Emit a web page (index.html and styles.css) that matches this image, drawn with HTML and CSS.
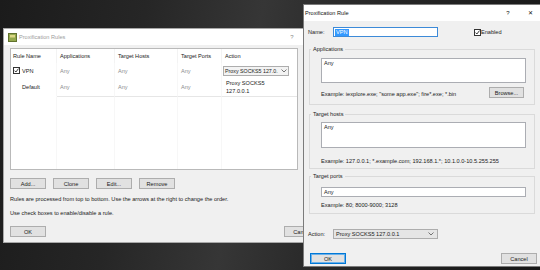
FILE: index.html
```html
<!DOCTYPE html>
<html lang="en">
<head>
<meta charset="utf-8">
<title>Proxification Rules</title>
<link rel="stylesheet" href="styles.css">
</head>
<body>
<div class="desktop">
    <!-- 规则列表窗口（未激活，被右边窗口挡住一部分） -->
    <div class="win rules-win">
        <div class="titlebar">
            <svg class="app-icon" width="9" height="9" viewBox="0 0 9 9"><rect x="0.5" y="0.5" width="8" height="8" fill="#93a84c" stroke="#62722e"/><path d="M2 2h5v2.5H2z" fill="#dcd784"/></svg>
            <span class="title">Proxification Rules</span>
            <span class="tb-btn">?</span>
            <span class="tb-btn">&#x2715;</span>
        </div>
        <div class="win-body">
            <div class="table-row">
                <table class="rules">
                    <colgroup>
                        <col class="c-name"><col class="c-apps"><col class="c-hosts"><col class="c-ports"><col class="c-action">
                    </colgroup>
                    <thead>
                        <tr><th>Rule Name</th><th>Applications</th><th>Target Hosts</th><th>Target Ports</th><th>Action</th></tr>
                    </thead>
                    <tbody>
                        <tr class="r-vpn">
                            <td><span class="chk-line"><svg class="chk" width="7" height="7" viewBox="0 0 7 7"><rect x="0.5" y="0.5" width="6" height="6" fill="#fff" stroke="#333"/><path d="M1.5 3.6L2.9 5L5.5 1.6" fill="none" stroke="#222" stroke-width="0.9"/></svg>VPN</span></td>
                            <td class="dim">Any</td><td class="dim">Any</td><td class="dim">Any</td>
                            <td class="act"><div class="combo small"><span class="combo-text">Proxy SOCKS5 127.0.</span><svg width="6" height="4" viewBox="0 0 6 4"><polyline points="0.5,0.5 3,3 5.5,0.5" fill="none" stroke="#555" stroke-width="0.8"/></svg></div></td>
                        </tr>
                        <tr class="r-default">
                            <td class="indent">Default</td>
                            <td class="dim">Any</td><td class="dim">Any</td><td class="dim">Any</td>
                            <td class="two">Proxy SOCKS5<br>127.0.0.1</td>
                        </tr>
                        <tr class="filler"><td></td><td></td><td></td><td></td><td></td></tr>
                    </tbody>
                </table>
                <div class="arrows">
                    <span class="btn arrow">&#x25B2;</span>
                    <span class="btn arrow">&#x25BC;</span>
                </div>
            </div>
            <div class="btn-row">
                <span class="btn">Add...</span>
                <span class="btn">Clone</span>
                <span class="btn">Edit...</span>
                <span class="btn">Remove</span>
            </div>
            <p class="hint">Rules are processed from top to bottom. Use the arrows at the right to change the order.</p>
            <p class="hint">Use check boxes to enable/disable a rule.</p>
            <div class="dlg-btns">
                <span class="btn">OK</span>
                <span class="btn push-right">Cancel</span>
            </div>
        </div>
    </div>

    <!-- 单条规则编辑窗口（当前激活） -->
    <div class="win rule-win">
        <div class="titlebar">
            <span class="title">Proxification Rule</span>
            <span class="tb-btn">?</span>
            <span class="tb-btn">&#x2715;</span>
        </div>
        <div class="win-body">
            <div class="form-row name-row">
                <span class="lbl">Name:</span>
                <div class="input focus"><span class="sel">VPN</span></div>
                <span class="enabled"><svg class="chk" width="7" height="7" viewBox="0 0 7 7"><rect x="0.5" y="0.5" width="6" height="6" fill="#fff" stroke="#333"/><path d="M1.5 3.6L2.9 5L5.5 1.6" fill="none" stroke="#222" stroke-width="0.9"/></svg>Enabled</span>
            </div>

            <fieldset class="group g-apps">
                <legend>Applications</legend>
                <div class="field tall">Any</div>
                <div class="ex-row">
                    <span class="ex">Example: iexplore.exe; "some app.exe"; fire*.exe; *.bin</span>
                    <span class="btn browse">Browse...</span>
                </div>
            </fieldset>

            <fieldset class="group g-hosts">
                <legend>Target hosts</legend>
                <div class="field tall hosts">Any</div>
                <p class="ex ex-hosts">Example: 127.0.0.1; *.example.com; 192.168.1.*; 10.1.0.0-10.5.255.255</p>
            </fieldset>

            <fieldset class="group g-ports">
                <legend>Target ports</legend>
                <div class="field">Any</div>
                <p class="ex ex-ports">Example: 80; 8000-9000; 3128</p>
            </fieldset>

            <div class="form-row action-row">
                <span class="lbl">Action:</span>
                <div class="combo"><span class="combo-text">Proxy SOCKS5 127.0.0.1</span><svg width="6" height="4" viewBox="0 0 6 4"><polyline points="0.5,0.5 3,3 5.5,0.5" fill="none" stroke="#555" stroke-width="0.8"/></svg></div>
            </div>

            <div class="dlg-btns">
                <span class="btn default">OK</span>
                <span class="btn push-right">Cancel</span>
            </div>
        </div>
    </div>
</div>
</body>
</html>
```

FILE: styles.css
```css
*{margin: 0;padding: 0;box-sizing: border-box;}
body{width: 540px;height: 270px;overflow: hidden;background: #161616;font-family: "Liberation Sans", Arial, sans-serif;font-size: 5.6px;line-height: 8px;color: #1a1a1a;}
/*桌面背景*/
.desktop{position: relative;width: 540px;height: 270px;background: linear-gradient(100deg, #1b1b1b 0%, #262626 25%, #363636 45%, #2a2a2a 60%, #161616 100%);}

/*窗口公共样式*/
.win{position: absolute;display: flex;flex-direction: column;background: #f0f0f0;}
.titlebar{display: flex;align-items: center;height: 16px;flex-shrink: 0;background: #fff;}
.title{flex: 1;white-space: nowrap;}
.tb-btn{width: 22px;text-align: center;font-size: 6px;}
.win-body{flex: 1;display: flex;flex-direction: column;}

/*按钮*/
.btn{display: flex;align-items: center;justify-content: center;width: 36px;height: 11px;background: #e1e1e1;border: 1px solid #adadad;white-space: nowrap;}
.btn.default{border-color: #0078d7;box-shadow: inset 0 0 0 1px #6cb0e8;}
.push-right{margin-left: auto;}
.dlg-btns{display: flex;}

/*左边规则列表窗口*/
.rules-win{left: 3px;top: 28px;width: 323px;height: 215px;border: 1px solid #a8a8a8;}
.rules-win .titlebar{padding-left: 4px;color: #9c9c9c;}
.rules-win .tb-btn{color: #8a8a8a;}
.app-icon{margin-right: 2px;flex-shrink: 0;}
.rules-win .win-body{padding: 3px 5px 0 6px;}

.table-row{display: flex;height: 122px;}
.rules{width: 290px;height: 122px;table-layout: fixed;border-collapse: separate;border-spacing: 0;border: 1px solid #b9b9b9;background: #fff;}
.c-name{width: 46px;}
.c-apps{width: 58px;}
.c-hosts{width: 63px;}
.c-ports{width: 44px;}
.rules th{height: 14px;font-weight: normal;text-align: left;padding-left: 3px;white-space: nowrap;border-right: 1px solid #f3f3f3;}
.rules th:first-child{padding-left: 2px;}
.rules td{padding-left: 3px;white-space: nowrap;overflow: hidden;border-right: 1px solid #f7f7f7;}
.rules td:last-child,.rules th:last-child{border-right: 0;}
.rules .dim{color: #8c8c8c;}
.r-vpn td{height: 15px;}
.r-default td{height: 19px;border-bottom: 1px solid #e6e6e6;}
.r-default td:first-child{border-bottom-color: #fff;}
.rules td:first-child{padding-left: 2px;}
.rules td.indent{padding-left: 11px;}
.rules td.act{padding-left: 1px;}
.rules td.two{padding-left: 4px;line-height: 8px;}
.chk-line{display: flex;align-items: center;}
.chk{margin-right: 2px;flex-shrink: 0;}
.arrows{display: flex;flex-direction: column;gap: 3px;margin-left: 6px;padding-top: 40px;}
.btn.arrow{width: 16px;height: 14px;font-size: 5px;color: #555;}

.btn-row{display: flex;gap: 7px;margin-top: 8px;}
.hint{margin-top: 6px;white-space: nowrap;}
.rules-win .dlg-btns{margin-top: 9px;}

/*下拉框*/
.combo{display: flex;align-items: center;width: 105px;height: 10px;padding: 0 3px 0 2px;background: #e5e5e5;border: 1px solid #adadad;white-space: nowrap;}
.combo-text{flex: 1;}
.combo svg{flex-shrink: 0;margin-left: 1px;}
.combo.small{width: 66px;padding: 0 1px;background: #f3f3f3;font-size: 5.3px;}

/*右边编辑窗口*/
.rule-win{left: 303px;top: 4px;width: 239px;height: 263px;border: 1px solid #7b7b7b;}
.rule-win .titlebar{padding-left: 1px;color: #111;}
.rule-win .win-body{padding: 0 4px;}
.form-row{display: flex;align-items: center;height: 10px;}
.lbl{width: 25px;}
.name-row{margin-top: 6px;}
.input{display: flex;align-items: center;width: 105px;height: 10px;padding-left: 1px;background: #fff;border: 1px solid #7a7a7a;}
.input.focus{border-color: #3c8ad8;}
.sel{background: #3399ff;color: #fff;padding: 0 1px;line-height: 7px;}
.enabled{display: flex;align-items: center;margin-left: 36px;}
.enabled .chk{margin-right: 0;}

/*分组框*/
.group{border: 1px solid #dadada;margin: 3px 2px 0 1px;padding: 4px 8px 4px 11px;min-width: 0;}
.group legend{margin-left: -10px;padding: 0 2px;line-height: 8px;}
.field{height: 10px;padding: 1px 2px;background: #fff;border: 1px solid #abadb3;line-height: 7px;}
.field.tall{height: 25px;}
.field.hosts{height: 26px;}
.ex{white-space: nowrap;}
.g-apps{margin-top: 8px;padding-top: 5px;padding-bottom: 6px;}
.ex-row{display: flex;align-items: flex-end;margin-top: 4px;height: 11px;}
.ex-row .ex{flex: 1;}
.btn.browse{width: 35px;margin-right: 2px;}
.g-hosts{margin-top: 5px;padding-bottom: 3px;}
.ex-hosts{margin-top: 9px;}
.g-ports{padding-top: 7px;}
.ex-ports{margin-top: 4px;}
.action-row{margin-top: 15px;}
.rule-win .dlg-btns{margin-top: 14px;padding-left: 2px;}
```
